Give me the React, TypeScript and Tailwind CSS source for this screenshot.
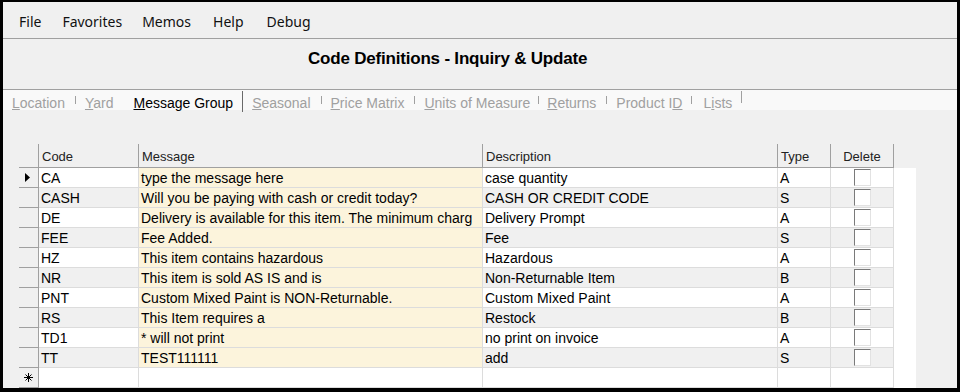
import React from 'react';

const rows = [
  ['CA', 'type the message here', 'case quantity', 'A'],
  ['CASH', 'Will you be paying with cash or credit today?', 'CASH OR CREDIT CODE', 'S'],
  ['DE', 'Delivery is available for this item. The minimum charg', 'Delivery Prompt', 'A'],
  ['FEE', 'Fee Added.', 'Fee', 'S'],
  ['HZ', 'This item contains hazardous', 'Hazardous', 'A'],
  ['NR', 'This item is sold AS IS and is', 'Non-Returnable Item', 'B'],
  ['PNT', 'Custom Mixed Paint is NON-Returnable.', 'Custom Mixed Paint', 'A'],
  ['RS', 'This Item requires a', 'Restock', 'B'],
  ['TD1', '* will not print', 'no print on invoice', 'A'],
  ['TT', 'TEST111111', 'add', 'S'],
];

const menus = [
  { label: 'File', cls: '' },
  { label: 'Favorites', cls: 'ml-[21px]' },
  { label: 'Memos', cls: 'ml-[20px]' },
  { label: 'Help', cls: 'ml-[22px]' },
  { label: 'Debug', cls: 'ml-[23px]' },
];

const tabs = [
  { first: 'L', rest: 'ocation', sep: 'short' },
  { first: 'Y', rest: 'ard', sep: 'none' },
  { first: 'M', rest: 'essage Group', sep: 'dark', active: true },
  { first: 'S', rest: 'easonal', sep: 'short' },
  { first: 'P', rest: 'rice Matrix', sep: 'short' },
  { first: 'U', rest: 'nits of Measure', sep: 'narrow' },
  { first: 'R', rest: 'eturns', sep: 'short' },
  { pre: 'Product I', first: 'D', rest: '', sep: 'wide' },
  { pre: 'L', first: 'i', rest: 'sts', sep: 'tall' },
];

function Checkbox() {
  return (
    <div className="w-[17px] h-[17px] bg-white border border-t-[#7a7a7a] border-l-[#7a7a7a] border-r-[#e2e2e2] border-b-[#e2e2e2]" />
  );
}

export default function App() {
  const grid = "font-['Liberation_Sans',Arial,sans-serif]";
  return (
    <div className="w-[960px] h-[392px] bg-black pt-[2px] pl-[3px] pr-[3px] pb-[4px]">
      <div className={`w-full h-full bg-[#f0f0f0] flex flex-col ${grid}`}>
        {/* menu bar */}
        <div className="h-[35px] border-b border-[#a0a0a0] box-content flex items-start pt-[7px] pl-[16px] font-['Noto_Sans',sans-serif] text-[14px] leading-[26px] text-[#111]">
          {menus.map(m => (
            <span key={m.label} className={m.cls}>{m.label}</span>
          ))}
        </div>

        {/* title */}
        <div className="h-[49px] border-b border-[#a0a0a0] box-content flex pl-[305px] pt-[10px]">
          <span className="text-[17px] font-bold tracking-[-0.2px] leading-[20px] text-black">
            Code Definitions - Inquiry &amp; Update
          </span>
        </div>

        {/* tabs */}
        <div className="h-[20px] bg-[#f9f9f9] flex items-start pl-[9px] text-[14px] leading-[16px]">
          {tabs.map((t, i) => (
            <div key={i} className="flex items-start">
              <span className={`pt-[5px] ${t.active ? 'text-black' : 'text-[#a0a0a0]'}`}>
                {t.pre}
                <span className="underline underline-offset-[1px]">{t.first}</span>
                {t.rest}
              </span>
              {t.sep === 'short' && <div className="ml-[10px] mr-[9px] mt-[6px] w-px h-[8px] bg-[#a0a0a0]" />}
              {t.sep === 'narrow' && <div className="ml-[8px] mr-[8px] mt-[6px] w-px h-[8px] bg-[#a0a0a0]" />}
              {t.sep === 'wide' && <div className="ml-[9px] mr-[11px] mt-[6px] w-px h-[8px] bg-[#a0a0a0]" />}
              {t.sep === 'none' && <div className="ml-[10px] mr-[9px] w-px h-[8px]" />}
              {t.sep === 'dark' && <div className="mx-[9px] mt-[1px] w-px h-[21px] bg-[#6a6a6a]" />}
              {t.sep === 'tall' && <div className="mx-[9px] mt-[1px] w-px h-[12px] bg-[#a0a0a0]" />}
            </div>
          ))}
        </div>

        {/* grid */}
        <div className="mt-[34px] ml-[16px] flex flex-col text-[14px] leading-[19px]">
          <div className="flex h-[24px] text-[13px] text-[#222]">
            <div className="w-[20px] border-r border-b border-[#a0a0a0]" />
            <div className="w-[100px] border-r border-b border-[#a0a0a0] pl-[3px] pt-[3px]">Code</div>
            <div className="w-[344px] border-r border-b border-[#a0a0a0] pl-[3px] pt-[3px]">Message</div>
            <div className="w-[295px] border-r border-b border-[#a0a0a0] pl-[3px] pt-[3px]">Description</div>
            <div className="w-[53px] border-r border-b border-[#a0a0a0] pl-[3px] pt-[3px]">Type</div>
            <div className="w-[63px] border-r border-b border-[#a0a0a0] pt-[3px] text-center">Delete</div>
          </div>
          {rows.map((r, i) => {
            const bg = i % 2 === 0 ? 'bg-white' : 'bg-[#f0f0f0]';
            return (
              <div key={r[0]} className="flex h-[20px] text-black">
                <div className="w-[20px] border-r border-b border-[#a0a0a0] flex items-center pl-[6px]">
                  {i === 0 && (
                    <svg width="5" height="9" viewBox="0 0 5 9">
                      <path d="M0 0 L5 4.5 L0 9 Z" fill="#000" />
                    </svg>
                  )}
                </div>
                <div className={`w-[100px] border-r border-b border-[#dcdcdc] pl-[2px] pt-[1px] whitespace-nowrap overflow-hidden ${bg}`}>{r[0]}</div>
                <div className="w-[344px] border-r border-b border-[#dcdcdc] pl-[2px] pt-[1px] whitespace-nowrap overflow-hidden bg-[#fcf4dc]">{r[1]}</div>
                <div className={`w-[295px] border-r border-b border-[#dcdcdc] pl-[2px] pt-[1px] whitespace-nowrap overflow-hidden ${bg}`}>{r[2]}</div>
                <div className={`w-[53px] border-r border-b border-[#dcdcdc] pl-[2px] pt-[1px] ${bg}`}>{r[3]}</div>
                <div className={`w-[63px] border-r border-b border-[#dcdcdc] flex justify-center pt-[1px] pl-[1px] ${bg}`}>
                  <Checkbox />
                </div>
                <div className="w-[22px] bg-white" />
              </div>
            );
          })}
          <div className="flex h-[20px]">
            <div className="w-[20px] border-r border-b border-[#a0a0a0] flex items-center pl-[5px]">
              <svg width="9" height="9" viewBox="0 0 9 9" stroke="#000" strokeWidth="1">
                <line x1="4.5" y1="0" x2="4.5" y2="9" />
                <line x1="0" y1="4.5" x2="9" y2="4.5" />
                <line x1="1.5" y1="1.5" x2="7.5" y2="7.5" />
                <line x1="7.5" y1="1.5" x2="1.5" y2="7.5" />
              </svg>
            </div>
            <div className="w-[100px] border-r border-b border-[#dcdcdc] bg-white" />
            <div className="w-[344px] border-r border-b border-[#dcdcdc] bg-white" />
            <div className="w-[295px] border-r border-b border-[#dcdcdc] bg-white" />
            <div className="w-[53px] border-r border-b border-[#dcdcdc] bg-white" />
            <div className="w-[63px] border-r border-b border-[#dcdcdc] bg-white" />
            <div className="w-[22px] bg-white" />
          </div>
        </div>
      </div>
    </div>
  );
}
